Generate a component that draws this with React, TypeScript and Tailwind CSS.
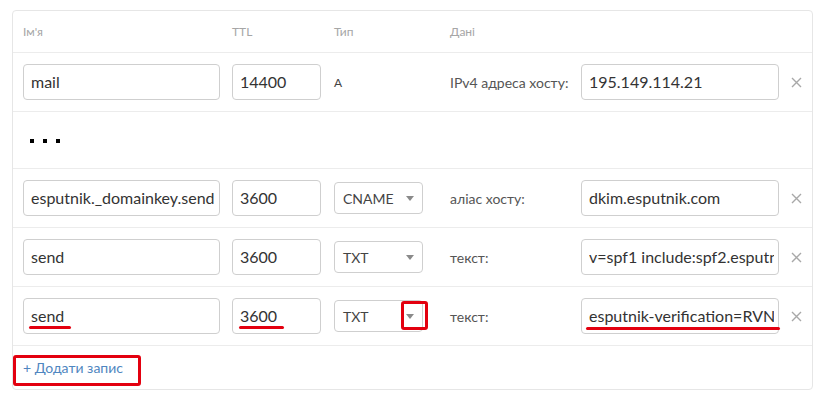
import React from 'react';

type Rec = {
  name: string;
  ttl: string;
  type: string;
  label: string;
  data: string;
  marked?: boolean;
};

const records: Rec[] = [
  { name: 'esputnik._domainkey.send', ttl: '3600', type: 'CNAME', label: 'аліас хосту:', data: 'dkim.esputnik.com' },
  { name: 'send', ttl: '3600', type: 'TXT', label: 'текст:', data: 'v=spf1 include:spf2.esputnik.com ~all' },
  { name: 'send', ttl: '3600', type: 'TXT', label: 'текст:', data: 'esputnik-verification=RVNQVVROSUs', marked: true },
];

const inputCls =
  'h-[36px] border border-[#cfcfcf] rounded-[4px] bg-white pl-[7px] pr-[4px] text-[16px] text-[#333] flex items-center whitespace-nowrap';

function Mark({ className }: { className: string }) {
  return <div className={'absolute h-[3px] rounded-full bg-[#e3000f] ' + className} />;
}

function Close() {
  return (
    <svg width="11" height="11" viewBox="0 0 11 11" className="text-[#a8a8a8]">
      <path d="M1 1L10 10M10 1L1 10" stroke="currentColor" strokeWidth="1.4" />
    </svg>
  );
}

function Row({ r }: { r: Rec }) {
  return (
    <div className="h-[59px] border-t border-[#ececec] flex items-center pl-[10px]">
      <div className={inputCls + ' w-[197px] relative'}>
        <span className="overflow-hidden">{r.name}</span>
        {r.marked && <Mark className="left-[5px] top-[27px] w-[42px]" />}
      </div>
      <div className={inputCls + ' w-[89px] ml-[12px] relative'}>
        {r.ttl}
        {r.marked && <Mark className="left-[6px] top-[27px] w-[45px]" />}
      </div>
      <div className="w-[89px] ml-[13px] relative">
        <div className="h-[32px] border border-[#cfcfcf] rounded-[4px] flex items-center pl-[8px] pr-[8px] text-[14px] text-[#444]">
          <span className="flex-1">{r.type}</span>
          <svg width="8" height="5" viewBox="0 0 8 5">
            <path d="M0 0H8L4 5Z" fill="#8a8a8a" />
          </svg>
        </div>
        {r.marked && (
          <div className="absolute left-[67px] top-[1px] w-[27px] h-[29px] border-[3px] border-[#e3000f] rounded-[3px]" />
        )}
      </div>
      <div className="ml-[27px] w-[131px] text-[14px] text-[#555]">{r.label}</div>
      <div className={inputCls + ' w-[198px] relative'}>
        <span className="overflow-hidden">{r.data}</span>
        {r.marked && <Mark className="left-[4px] top-[28px] w-[194px]" />}
      </div>
      <div className="flex-1 flex justify-center pl-[2px]">
        <Close />
      </div>
    </div>
  );
}

export default function App() {
  return (
    <div className="w-[825px] h-[400px] bg-white pt-[10px] pl-[12px]" style={{ fontFamily: 'Lato, "Open Sans", sans-serif' }}>
      <div className="w-[801px] border border-[#e6e6e6] rounded-[4px]">
        <div className="h-[41px] flex items-center pl-[10px] text-[12px] text-[#a6a6a6]">
          <div className="w-[209px]">Ім'я</div>
          <div className="w-[102px]">TTL</div>
          <div className="w-[116px]">Тип</div>
          <div>Дані</div>
        </div>
        <div className="h-[59px] border-t border-[#ececec] flex items-center pl-[10px]">
          <div className={inputCls + ' w-[197px]'}>mail</div>
          <div className={inputCls + ' w-[89px] ml-[12px]'}>14400</div>
          <div className="w-[89px] ml-[13px] text-[12px] text-[#444] pt-[2px]">A</div>
          <div className="ml-[27px] w-[131px] text-[14px] text-[#555]">IPv4 адреса хосту:</div>
          <div className={inputCls + ' w-[198px]'}>195.149.114.21</div>
          <div className="flex-1 flex justify-center pl-[2px]">
            <Close />
          </div>
        </div>
        <div className="h-[57px] border-t border-[#ececec] flex items-center pl-[17px] pt-[2px] gap-[9px]">
          <div className="w-[4px] h-[4px] bg-black" />
          <div className="w-[4px] h-[4px] bg-black" />
          <div className="w-[4px] h-[4px] bg-black" />
        </div>
        {records.map((r, i) => (
          <Row key={i} r={r} />
        ))}
        <div className="h-[44px] border-t border-[#ececec] flex items-center pl-[10px] relative">
          <span className="text-[14px] text-[#4f86c0]">+ Додати запис</span>
          <div className="absolute left-[0px] top-[9px] w-[128px] h-[31px] border-[3px] border-[#e3000f] rounded-[3px]" />
        </div>
      </div>
    </div>
  );
}
